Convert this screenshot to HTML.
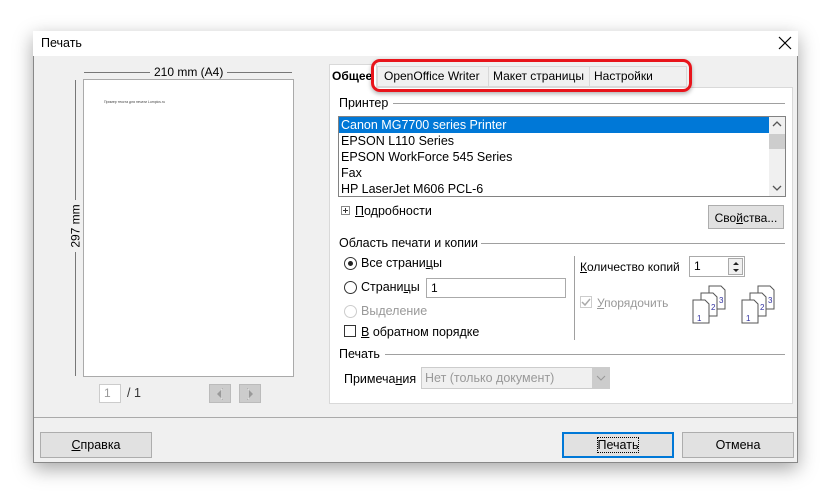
<!DOCTYPE html>
<html><head><meta charset="utf-8"><style>
*{box-sizing:border-box;margin:0;padding:0}
body{width:830px;height:496px;background:#fff;position:relative;overflow:hidden;font-family:"Liberation Sans","DejaVu Sans",sans-serif;font-size:12px;color:#000}
.a{position:absolute}
.win{left:33px;top:31px;width:765px;height:432px;background:#f0f0f0;border:1px solid #888;box-shadow:0 6px 18px rgba(0,0,0,.35)}
.title{left:33px;top:31px;width:765px;height:25px;background:#fff}
.btn{position:absolute;background:#e1e1e1;border:1px solid #adadad;text-align:center;line-height:24px;font-size:12.5px}
.hl{position:absolute;height:1px;background:#a0a0a0}
u{text-decoration:underline}
.rad{position:absolute;width:13px;height:13px;border:1px solid #333;border-radius:50%;background:#fff}
.t{position:absolute;white-space:nowrap;font-size:12.5px}
</style></head><body>
<div class="a win"></div>
<div class="a title"></div>
<div class="t" style="left:41px;top:36px">Печать</div>
<svg class="a" style="left:778px;top:36px" width="14" height="14"><path d="M1 1L13 13M13 1L1 13" stroke="#000" stroke-width="1.2"/></svg>

<div class="hl" style="left:84px;top:72px;width:66px;background:#777"></div>
<div class="t" style="left:154px;top:65px;font-size:12px">210 mm (A4)</div>
<div class="hl" style="left:227px;top:72px;width:65px;background:#777"></div>
<div class="a" style="left:75px;top:80px;width:1px;height:120px;background:#777"></div>
<div class="a" style="left:75px;top:252px;width:1px;height:124px;background:#777"></div>
<div class="t" style="left:54px;top:219px;transform:rotate(-90deg);font-size:12px">297 mm</div>
<div class="a" style="left:83px;top:79px;width:211px;height:298px;background:#fff;border:1px solid #aaa"></div>
<div class="t" style="left:104px;top:100px;font-size:3.5px;color:#444">Пример текста для печати Lumpics.ru</div>
<div class="a" style="left:99px;top:384px;width:22px;height:19px;background:#fff;border:1px solid #ccc;color:#999;font-size:12px;padding-left:4px;line-height:17px">1</div>
<div class="t" style="left:127px;top:386px;color:#333">/ 1</div>
<div class="a" style="left:209px;top:384px;width:22px;height:19px;background:#ccc;border:1px solid #bbb"></div>
<svg class="a" style="left:214px;top:387px" width="12" height="14"><path d="M9 1L3 7L9 13Z" fill="#999"/><path d="M8 2V12" stroke="#fff"/></svg>
<div class="a" style="left:239px;top:384px;width:22px;height:19px;background:#ccc;border:1px solid #bbb"></div>
<svg class="a" style="left:244px;top:387px" width="12" height="14"><path d="M3 1L9 7L3 13Z" fill="#999"/><path d="M4 2V12" stroke="#fff"/></svg>

<div class="a" style="left:329px;top:87px;width:464px;height:317px;background:#fff;border:1px solid #d9d9d9"></div>
<div class="a" style="left:329px;top:64px;width:48px;height:24px;background:#fff;border:1px solid #d9d9d9;border-bottom:none"></div>
<div class="t" style="left:332px;top:69px;font-weight:bold;font-size:12px">Общее</div>
<div class="a" style="left:377px;top:66px;width:310px;height:21px;background:#f0f0f0;border:1px solid #d9d9d9"></div>
<div class="a" style="left:488px;top:66px;width:1px;height:21px;background:#d9d9d9"></div>
<div class="a" style="left:589px;top:66px;width:1px;height:21px;background:#d9d9d9"></div>
<div class="t" style="left:384px;top:69px;font-size:12px">OpenOffice Writer</div>
<div class="t" style="left:493px;top:69px;font-size:12px">Макет страницы</div>
<div class="t" style="left:594px;top:69px;font-size:12px">Настройки</div>
<div class="a" style="left:371px;top:59px;width:321px;height:33px;border:3px solid #e8141b;border-radius:9px;box-shadow:0 2px 4px rgba(0,0,0,.3)"></div>

<div class="t" style="left:339px;top:96px">Принтер</div>
<div class="hl" style="left:393px;top:103px;width:392px"></div>
<div class="a" style="left:338px;top:116px;width:448px;height:81px;background:#fff;border:1px solid #828282"></div>
<div class="a" style="left:339px;top:117px;width:430px;height:16px;background:#0078d7"></div>
<div class="t" style="left:341px;top:118px;color:#fff">Canon MG7700 series Printer</div>
<div class="t" style="left:341px;top:134px">EPSON L110 Series</div>
<div class="t" style="left:341px;top:150px">EPSON WorkForce 545 Series</div>
<div class="t" style="left:341px;top:166px">Fax</div>
<div class="t" style="left:341px;top:182px">HP LaserJet M606 PCL-6</div>
<div class="a" style="left:769px;top:117px;width:16px;height:79px;background:#f0f0f0"></div>
<div class="a" style="left:769px;top:134px;width:16px;height:15px;background:#cdcdcd"></div>
<svg class="a" style="left:771px;top:120px" width="12" height="8"><path d="M2 6L6 2L10 6" stroke="#555" fill="none" stroke-width="1.3"/></svg>
<svg class="a" style="left:771px;top:184px" width="12" height="8"><path d="M2 2L6 6L10 2" stroke="#555" fill="none" stroke-width="1.3"/></svg>

<svg class="a" style="left:341px;top:206px" width="9" height="9"><rect x=".5" y=".5" width="8" height="8" fill="#fff" stroke="#888"/><path d="M2 4.5H7M4.5 2V7" stroke="#333"/></svg>
<div class="t" style="left:355px;top:204px"><u>П</u>одробности</div>
<div class="btn" style="left:708px;top:205px;width:76px;height:24px;font-size:12px">Сво<u>й</u>ства...</div>

<div class="t" style="left:339px;top:236px">Область печати и копии</div>
<div class="hl" style="left:481px;top:243px;width:304px"></div>
<div class="rad" style="left:344px;top:257px"></div><div class="a" style="left:348px;top:261px;width:5px;height:5px;border-radius:50%;background:#222"></div>
<div class="t" style="left:361px;top:256px">Все страни<u>ц</u>ы</div>
<div class="rad" style="left:344px;top:281px"></div>
<div class="t" style="left:361px;top:280px">Страни<u>ц</u>ы</div>
<div class="a" style="left:426px;top:278px;width:140px;height:20px;background:#fff;border:1px solid #aaa;padding-left:4px;line-height:18px">1</div>
<div class="rad" style="left:344px;top:305px;border-color:#ccc"></div>
<div class="t" style="left:361px;top:304px;color:#999">Выделение</div>
<div class="a" style="left:344px;top:325px;width:12px;height:12px;border:1px solid #333;background:#fff"></div>
<div class="t" style="left:361px;top:325px"><u>В</u> обратном порядке</div>
<div class="a" style="left:574px;top:256px;width:1px;height:84px;background:#a0a0a0"></div>
<div class="t" style="left:580px;top:260px;font-size:12px"><u>К</u>оличество копий</div>
<div class="a" style="left:689px;top:256px;width:56px;height:21px;background:#fff;border:1px solid #aaa;padding-left:4px;line-height:19px">1</div>
<div class="a" style="left:728px;top:258px;width:15px;height:17px;border:1px solid #aaa;background:#f0f0f0"></div>
<svg class="a" style="left:731px;top:259px" width="10" height="16"><path d="M2 6L5 3L8 6Z M2 10L5 13L8 10Z" fill="#222"/></svg>
<div class="a" style="left:580px;top:296px;width:12px;height:12px;border:1px solid #ccc;background:#fff"></div>
<svg class="a" style="left:580px;top:296px" width="12" height="12"><path d="M2 6L5 9L10 3" stroke="#aaa" fill="none" stroke-width="1.5"/></svg>
<div class="t" style="left:597px;top:296px;color:#999;font-size:12px"><u>У</u>порядочить</div>
<svg class="a" style="left:685px;top:285px" width="96" height="42" font-family="Liberation Sans" font-size="8" fill="#3030a0">
<g stroke="#555" fill="#fff"><path d="M24 1h12l4 4v19h-16z"/><path d="M16 8h12l4 4v19h-16z"/><path d="M8 15h12l4 4v19h-16z"/>
<path d="M73 1h12l4 4v19h-16z"/><path d="M65 8h12l4 4v19h-16z"/><path d="M57 15h12l4 4v19h-16z"/></g>
<text x="34" y="18" stroke="none">3</text><text x="26" y="25" stroke="none">2</text><text x="12" y="36" stroke="none">1</text>
<text x="83" y="18" stroke="none">3</text><text x="75" y="25" stroke="none">2</text><text x="61" y="36" stroke="none">1</text></svg>

<div class="t" style="left:339px;top:347px">Печать</div>
<div class="hl" style="left:385px;top:354px;width:400px"></div>
<div class="t" style="left:344px;top:372px">Примеча<u>н</u>ия</div>
<div class="a" style="left:421px;top:367px;width:189px;height:22px;background:#f0f0f0;border:1px solid #ccc;color:#999;padding-left:3px;line-height:20px;font-size:12.5px">Нет (только документ)</div>
<div class="a" style="left:592px;top:368px;width:17px;height:20px;background:#ccc"></div>
<svg class="a" style="left:595px;top:374px" width="12" height="8"><path d="M2 2L6 6L10 2" stroke="#999" fill="none"/></svg>

<div class="hl" style="left:34px;top:417px;width:763px;background:#aaa"></div>
<div class="btn" style="left:40px;top:432px;width:112px;height:26px"><u>С</u>правка</div>
<div class="btn" style="left:562px;top:432px;width:112px;height:26px;border:2px solid #0078d7;line-height:22px"><span style="outline:1px dotted #000">Печать</span></div>
<div class="btn" style="left:682px;top:432px;width:112px;height:26px">Отмена</div>
</body></html>
